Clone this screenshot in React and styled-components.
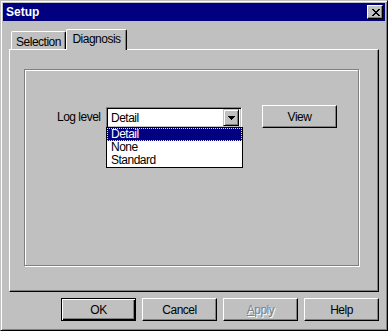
import React from "react";
import styled, { createGlobalStyle } from "styled-components";

const GlobalStyle = createGlobalStyle`
  html, body {
    margin: 0;
    padding: 0;
    background: #c0c0c0;
  }
  * {
    box-sizing: border-box;
  }
`;

const Window = styled.div`
  width: 388px;
  height: 331px;
  display: flex;
  flex-direction: column;
  background: #c0c0c0;
  border: 1px solid;
  border-color: #c0c0c0 #000 #000 #c0c0c0;
  box-shadow: inset 1px 1px #fff, inset -1px -1px #808080;
  padding: 2px;
  font-family: "Liberation Sans", Arial, sans-serif;
  font-size: 12px;
  letter-spacing: -0.5px;
  color: #000;
`;

const TitleBar = styled.div`
  height: 18px;
  flex: none;
  background: #000080;
  display: flex;
  align-items: center;
  justify-content: space-between;
  padding-left: 3px;
  padding-right: 2px;
`;

const Title = styled.span`
  color: #fff;
  font-weight: bold;
  font-size: 12px;
  letter-spacing: 0;
`;

const CloseButton = styled.div`
  width: 16px;
  height: 14px;
  background: #c0c0c0;
  border: 1px solid;
  border-color: #fff #000 #000 #fff;
  box-shadow: inset -1px -1px #808080;
  display: flex;
  align-items: center;
  justify-content: center;
  padding-left: 1px;
`;

const Body = styled.div`
  flex: 1;
  display: flex;
  flex-direction: column;
  padding: 8px 6px 0 6px;
`;

const TabRow = styled.div`
  display: flex;
  align-items: flex-end;
  height: 20px;
  padding-left: 2px;
  position: relative;
  z-index: 1;
`;

const Tab = styled.div`
  width: ${(p) => p.$w}px;
  height: ${(p) => (p.$active ? 21 : 18)}px;
  margin-bottom: ${(p) => (p.$active ? -1 : 0)}px;
  background: #c0c0c0;
  border-top: 1px solid #fff;
  border-left: 1px solid #fff;
  border-right: 1px solid #000;
  border-top-left-radius: 2px;
  border-top-right-radius: 2px;
  box-shadow: inset -1px 0 #808080;
  display: flex;
  justify-content: center;
  padding-top: ${(p) => (p.$active ? 2 : 3)}px;
  line-height: 14px;
`;

const Panel = styled.div`
  height: 243px;
  flex: none;
  border: 1px solid;
  border-color: #fff #000 #000 #fff;
  box-shadow: inset -1px -1px #808080;
  padding: 19px 0 0 14px;
`;

const GroupBox = styled.div`
  width: 335px;
  height: 197px;
  border: 1px solid #808080;
  box-shadow: inset 1px 1px #fff, 1px 1px #fff;
`;

const FieldRow = styled.div`
  display: flex;
  align-items: flex-start;
  margin-top: 35px;
  padding-left: 32px;
`;

const Label = styled.span`
  width: 49px;
  margin-top: 2px;
  line-height: 21px;
`;

const ComboWrap = styled.div`
  position: relative;
  width: 136px;
  height: 21px;
  margin-top: 2px;
`;

const ComboField = styled.div`
  width: 100%;
  height: 100%;
  background: #fff;
  border: 1px solid;
  border-color: #808080 #fff #fff #808080;
  box-shadow: inset 1px 1px #000, inset -1px -1px #c0c0c0;
  display: flex;
  align-items: center;
  padding: 2px 2px 2px 4px;
`;

const ComboValue = styled.span`
  flex: 1;
`;

const ArrowButton = styled.div`
  width: 16px;
  height: 17px;
  background: #c0c0c0;
  border: 1px solid;
  border-color: #c0c0c0 #000 #000 #c0c0c0;
  box-shadow: inset 1px 1px #fff, inset -1px -1px #808080;
  display: flex;
  align-items: center;
  justify-content: center;
`;

const DropList = styled.div`
  position: absolute;
  top: calc(100% - 1px);
  left: 0;
  width: 137px;
  background: #fff;
  border: 1px solid #000;
`;

const ListItem = styled.div`
  height: 13px;
  line-height: 11px;
  padding-left: 3px;
  color: ${(p) => (p.$selected ? "#fff" : "#000")};
  background: ${(p) => (p.$selected ? "#000080" : "transparent")};
  border: 1px dotted ${(p) => (p.$selected ? "#ffff00" : "transparent")};
`;

const Button = styled.div`
  width: 75px;
  height: 23px;
  background: #c0c0c0;
  border: 1px solid;
  border-color: #fff #000 #000 #fff;
  box-shadow: inset -1px -1px #808080;
  display: flex;
  align-items: center;
  justify-content: center;
  color: ${(p) => (p.$disabled ? "#808080" : "#000")};
  text-shadow: ${(p) => (p.$disabled ? "1px 1px #fff" : "none")};
`;

const DefaultButton = styled(Button)`
  border-color: #000;
  box-shadow: inset 1px 1px #fff, inset -1px -1px #000, inset -2px -2px #808080;
`;

const ViewButton = styled(Button)`
  margin-left: 20px;
`;

const ButtonRow = styled.div`
  display: flex;
  justify-content: flex-end;
  gap: 6px;
  margin-top: 6px;
`;

const Mnemonic = styled.span`
  text-decoration: underline;
`;

const CloseGlyph = () => (
  <svg width="8" height="7" viewBox="0 0 8 7" shapeRendering="crispEdges">
    <path
      fill="#000"
      d="M0 0h2v1H0zM6 0h2v1H6zM1 1h2v1H1zM5 1h2v1H5zM2 2h4v1H2zM3 3h2v1H3zM2 4h4v1H2zM1 5h2v1H1zM5 5h2v1H5zM0 6h2v1H0zM6 6h2v1H6z"
    />
  </svg>
);

const DownArrow = () => (
  <svg width="7" height="4" viewBox="0 0 7 4" shapeRendering="crispEdges">
    <path fill="#000" d="M0 0h7v1H0zM1 1h5v1H1zM2 2h3v1H2zM3 3h1v1H3z" />
  </svg>
);

const levels = ["Detail", "None", "Standard"];

const App = () => {
  return (
    <>
      <GlobalStyle />
      <Window>
        <TitleBar>
          <Title>Setup</Title>
          <CloseButton>
            <CloseGlyph />
          </CloseButton>
        </TitleBar>
        <Body>
          <TabRow>
            <Tab $w={55}>Selection</Tab>
            <Tab $w={61} $active>
              Diagnosis
            </Tab>
          </TabRow>
          <Panel>
            <GroupBox>
              <FieldRow>
                <Label>Log level</Label>
                <ComboWrap>
                  <ComboField>
                    <ComboValue>Detail</ComboValue>
                    <ArrowButton>
                      <DownArrow />
                    </ArrowButton>
                  </ComboField>
                  <DropList>
                    {levels.map((l, i) => (
                      <ListItem key={l} $selected={i === 0}>
                        {l}
                      </ListItem>
                    ))}
                  </DropList>
                </ComboWrap>
                <ViewButton>View</ViewButton>
              </FieldRow>
            </GroupBox>
          </Panel>
          <ButtonRow>
            <DefaultButton>OK</DefaultButton>
            <Button>Cancel</Button>
            <Button $disabled>
              <Mnemonic>A</Mnemonic>pply
            </Button>
            <Button>Help</Button>
          </ButtonRow>
        </Body>
      </Window>
    </>
  );
};

export default App;
